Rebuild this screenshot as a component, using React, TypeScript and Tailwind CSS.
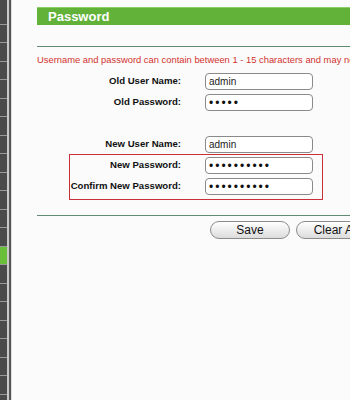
import type { ReactNode } from "react";

const font = { fontFamily: '"Liberation Sans", Arial, sans-serif' };

const Row = ({ label, children, labelWidth }: { label: string; children: ReactNode; labelWidth: string }) => (
  <div className="flex items-center h-[21px]">
    <span className={`${labelWidth} shrink-0 whitespace-nowrap text-right text-[9.6px] font-bold text-[#111]`}>{label}</span>
    {children}
  </div>
);

const Field = ({ value, password }: { value: string; password?: boolean }) => (
  <input
    readOnly
    type={password ? "password" : "text"}
    defaultValue={value}
    className={
      password
        ? "ml-[24px] w-[108px] h-[17px] shrink-0 rounded-[4px] border border-[#8a8a8a] bg-white px-[3px] text-[12px] tracking-[2px] text-[#111] outline-none"
        : "ml-[24px] w-[108px] h-[17px] shrink-0 rounded-[4px] border border-[#8a8a8a] bg-white px-[3px] text-[10px] text-[#222] outline-none"
    }
  />
);

export default function App() {
  const items = Array.from({ length: 22 });
  return (
    <div className="flex w-[350px] h-[400px] overflow-hidden bg-[#fbfbfb]" style={font}>
      <div className="flex shrink-0">
        <div className="w-[7px] bg-[#4a4a4a] flex flex-col pt-[6px]">
          {items.map((_, i) => (
            <div
              key={i}
              className={
                i === 13
                  ? "h-[18.5px] shrink-0 bg-[#6abf3a] border-b border-[#9a9a9a]"
                  : "h-[18.5px] shrink-0 border-b border-[#9a9a9a]"
              }
            />
          ))}
        </div>
        <div className="w-[2px] bg-[#c9c9c9]" />
        <div className="w-[2px] bg-[#555]" />
        <div className="w-[1px] bg-[#dedede]" />
      </div>

      <div className="flex-1 min-w-0 pl-[25px] pt-[7px]">
        <div className="h-[18px] bg-[#62b23a] border-t border-[#8fcf6a] flex items-center pl-[11px]">
          <span className="text-[13px] font-bold text-white leading-none">Password</span>
        </div>

        <div className="mt-[21px] h-[1px] bg-[#5f8a74]" />

        <p className="mt-[7px] text-[9.4px] text-[#d2322f] whitespace-nowrap overflow-hidden leading-[12px]">
          Username and password can contain between 1 - 15 characters and may not include spaces.
        </p>

        <div className="mt-[5px]">
          <Row label="Old User Name:" labelWidth="w-[144px]">
            <Field value="admin" />
          </Row>
          <Row label="Old Password:" labelWidth="w-[144px]">
            <Field value="admin" password />
          </Row>
        </div>

        <div className="mt-[21px]">
          <Row label="New User Name:" labelWidth="w-[144px]">
            <Field value="admin" />
          </Row>
        </div>

        <div className="-mt-[1px] ml-[32px] w-[254px] border border-[#c8303a] pb-[2px]">
          <Row label="New Password:" labelWidth="w-[111px]">
            <Field value="adminadmin" password />
          </Row>
          <Row label="Confirm New Password:" labelWidth="w-[111px]">
            <Field value="adminadmin" password />
          </Row>
        </div>

        <div className="mt-[15px] h-[1px] bg-[#5f8a74]" />

        <div className="mt-[5px] flex gap-[6px] pl-[173px]">
          <button className="shrink-0 w-[80px] h-[18px] rounded-full border border-[#8c8c8c] bg-gradient-to-b from-white to-[#dcdcdc] text-[12px] text-[#111] leading-none">
            Save
          </button>
          <button className="shrink-0 w-[80px] h-[18px] rounded-full border border-[#8c8c8c] bg-gradient-to-b from-white to-[#dcdcdc] text-[12px] text-[#111] leading-none">
            Clear All
          </button>
        </div>
      </div>
    </div>
  );
}
